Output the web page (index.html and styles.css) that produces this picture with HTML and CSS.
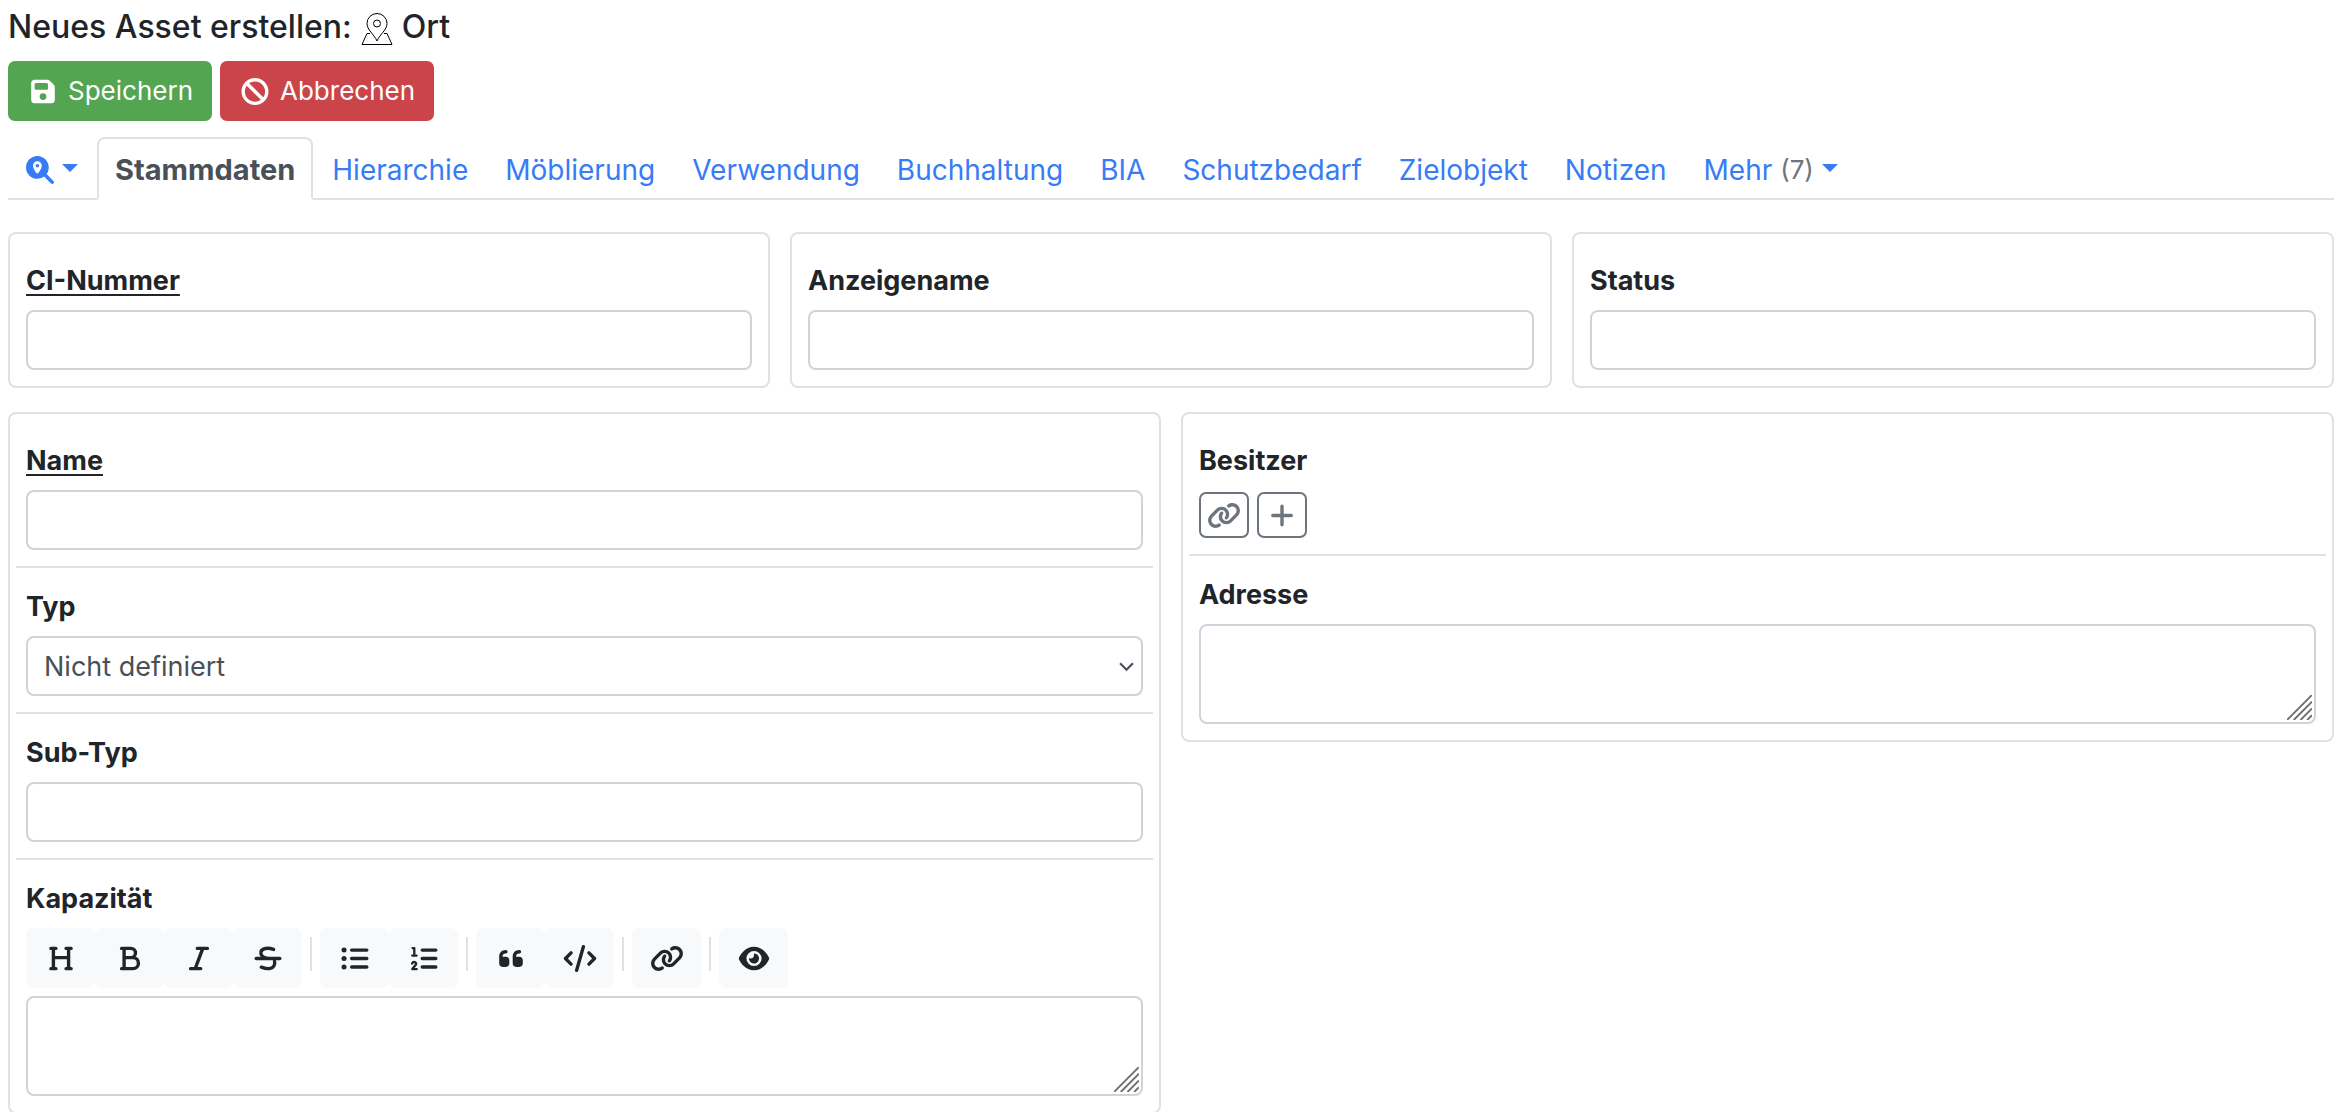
FILE: index.html
```html
<!DOCTYPE html>
<html lang="de">
<head>
<meta charset="utf-8">
<meta name="viewport" content="width=device-width, initial-scale=1">
<title>Neues Asset erstellen: Ort</title>
<link rel="stylesheet" href="styles.css">
</head>
<body>
<svg class="sprite" aria-hidden="true">
  <symbol id="i-link" viewBox="0 0 640 512"><path d="M579.8 267.7c56.5-56.5 56.5-148 0-204.5c-50-50-128.8-56.5-186.3-15.4l-1.6 1.1c-14.4 10.3-17.7 30.3-7.4 44.6s30.3 17.7 44.6 7.4l1.6-1.1c32.1-22.9 76-19.3 103.8 8.6c31.5 31.5 31.5 82.5 0 114L422.3 334.8c-31.5 31.5-82.5 31.5-114 0c-27.9-27.9-31.5-71.8-8.6-103.8l1.1-1.6c10.3-14.4 6.9-34.4-7.4-44.6s-34.4-6.9-44.6 7.4l-1.1 1.6C206.5 251.2 213 330 263 380c56.5 56.5 148 56.5 204.5 0L579.8 267.7zM60.2 244.3c-56.5 56.5-56.5 148 0 204.5c50 50 128.8 56.5 186.3 15.4l1.6-1.1c14.4-10.3 17.7-30.3 7.4-44.6s-30.3-17.7-44.6-7.4l-1.6 1.1c-32.1 22.9-76 19.3-103.8-8.6C74 372 74 321 105.5 289.5L217.7 177.2c31.5-31.5 82.5-31.5 114 0c27.9 27.9 31.5 71.8 8.6 103.9l-1.1 1.6c-10.3 14.4-6.9 34.4 7.4 44.6s34.4 6.9 44.6-7.4l1.1-1.6C433.5 260.8 427 182 377 132c-56.5-56.5-148-56.5-204.5 0L60.2 244.3z"/></symbol>
  <symbol id="i-grip" viewBox="0 0 26 26"><path d="M0 26L26 0M7 26L26 7M14 26L26 14M21 26L26 21" fill="none" stroke="#6f6f6f" stroke-width="2"/></symbol>
</svg>

<header class="page-head">
  <h1 class="title">Neues Asset erstellen:
    <svg class="title-icon" viewBox="0 -4 32 36" aria-hidden="true"><path d="M16 28C13 21 6 17 6 10.500a10 10 0 0 1 20 0C26 17 19 21 16 28z"/><circle cx="16" cy="10.500" r="3.500"/><path d="M9 20.500H6L1 31.500H31L26 20.500H23"/></svg>
    Ort</h1>
  <div class="actions">
    <button type="submit" form="asset" class="btn btn-save"><svg class="icon" viewBox="0 0 448 512" aria-hidden="true"><path d="M64 32C28.700 32 0 60.700 0 96V416c0 35.300 28.700 64 64 64H384c35.300 0 64-28.700 64-64V173.300c0-17-6.700-33.300-18.700-45.300L352 50.700C340 38.700 323.700 32 306.700 32H64zm0 96c0-17.700 14.300-32 32-32H288c17.700 0 32 14.300 32 32v64c0 17.700-14.300 32-32 32H96c-17.700 0-32-14.300-32-32V128zM224 288a64 64 0 1 1 0 128 64 64 0 1 1 0-128z" fill-rule="evenodd"/></svg>Speichern</button>
    <button type="button" class="btn btn-cancel"><svg class="icon" viewBox="0 0 512 512" aria-hidden="true"><path d="M367.200 412.500L99.500 144.800C77.100 176.100 64 214.500 64 256c0 106 86 192 192 192c41.500 0 79.900-13.100 111.200-35.500zm45.300-45.300C434.900 335.900 448 297.500 448 256c0-106-86-192-192-192c-41.500 0-79.900 13.100-111.200 35.500L412.500 367.200zM0 256a256 256 0 1 1 512 0A256 256 0 1 1 0 256z"/></svg>Abbrechen</button>
  </div>
</header>

<nav class="tabs" aria-label="Bereiche">
  <a class="tab tab-search" href="#suche" aria-label="Suche"><svg class="icon-search" viewBox="0 0 512 512" aria-hidden="true"><path fill-rule="evenodd" d="M416 208c0 45.900-14.900 88.300-40 122.700L502.600 457.400c12.500 12.500 12.500 32.800 0 45.300s-32.800 12.500-45.300 0L330.700 376c-34.400 25.200-76.800 40-122.700 40C93.100 416 0 322.900 0 208S93.100 0 208 0S416 93.100 416 208zM288 176c0-44.200-35.800-80-80-80s-80 35.800-80 80c0 48.800 46.500 111.600 68.600 138.600c6 7.300 16.800 7.300 22.700 0c22.100-27 68.700-89.900 68.700-138.600zm-112 0a32 32 0 1 1 64 0a32 32 0 1 1-64 0z"/></svg><span class="caret"></span></a>
  <a class="tab tab-active" href="#stammdaten" aria-current="page">Stammdaten</a>
  <a class="tab" href="#hierarchie">Hierarchie</a>
  <a class="tab" href="#moeblierung">Möblierung</a>
  <a class="tab" href="#verwendung">Verwendung</a>
  <a class="tab" href="#buchhaltung">Buchhaltung</a>
  <a class="tab" href="#bia">BIA</a>
  <a class="tab" href="#schutzbedarf">Schutzbedarf</a>
  <a class="tab" href="#zielobjekt">Zielobjekt</a>
  <a class="tab" href="#notizen">Notizen</a>
  <a class="tab" href="#mehr">Mehr <span class="count">(7)</span><span class="caret"></span></a>
</nav>

<form id="asset" class="form">
  <div class="row row-three">
    <section class="card"><div class="field"><label class="label" for="ci"><span class="required">CI-Nummer</span></label><input class="control" id="ci" type="text"></div></section>
    <section class="card"><div class="field"><label class="label" for="anzeige">Anzeigename</label><input class="control" id="anzeige" type="text"></div></section>
    <section class="card"><div class="field"><label class="label" for="status">Status</label><input class="control" id="status" type="text"></div></section>
  </div>

  <div class="row row-two">
    <section class="card">
      <div class="field"><label class="label" for="name"><span class="required">Name</span></label><input class="control" id="name" type="text"></div>
      <div class="field"><label class="label" for="typ">Typ</label>
        <div class="wrap"><select class="control select" id="typ"><option>Nicht definiert</option></select><svg class="chevron" viewBox="0 0 14 9" aria-hidden="true"><path d="M1 1L7 7L13 1"/></svg></div>
      </div>
      <div class="field"><label class="label" for="subtyp">Sub-Typ</label><input class="control" id="subtyp" type="text"></div>
      <div class="field"><label class="label" for="kapazitaet">Kapazität</label>
        <div class="toolbar" role="toolbar" aria-label="Formatierung">
          <button type="button" class="tool" aria-label="Überschrift"><svg class="glyph line" viewBox="0 0 448 512"><path d="M32 64h96M80 64v384M32 448h96M320 64h96M368 64v384M320 448h96M80 240h288"/></svg></button>
          <button type="button" class="tool" aria-label="Fett"><svg class="glyph line" viewBox="0 0 384 512"><path d="M32 64H208a88 88 0 0 1 0 176H80M208 240h40a104 104 0 0 1 0 208H32M80 64v384"/></svg></button>
          <button type="button" class="tool" aria-label="Kursiv"><svg class="glyph line" viewBox="0 0 384 512"><path d="M160 64h192M32 448h192M264 64L120 448"/></svg></button>
          <button type="button" class="tool" aria-label="Durchgestrichen"><svg class="glyph line" viewBox="0 0 512 512"><path d="M32 256h448M362 84C300 62 240 60 208 66C150 76 112 110 122 168C128 215 180 235 256 256M380 310C396 370 360 430 300 443C240 455 180 440 128 420"/></svg></button>
          <span class="divider"></span>
          <button type="button" class="tool" aria-label="Liste"><svg class="glyph line" viewBox="0 0 512 512"><path d="M192 96h288M192 256h288M192 416h288"/><circle class="dot" cx="48" cy="96" r="48"/><circle class="dot" cx="48" cy="256" r="48"/><circle class="dot" cx="48" cy="416" r="48"/></svg></button>
          <button type="button" class="tool" aria-label="Nummerierte Liste"><svg class="glyph line" viewBox="0 0 512 512"><path d="M222 96h258M222 256h258M222 416h258"/><path class="numeral" d="M40 60h32v132M32 200h84M30 350C50 305 120 318 104 368L34 456H118"/></svg></button>
          <span class="divider"></span>
          <button type="button" class="tool" aria-label="Zitat"><svg class="glyph" viewBox="0 0 448 512"><path d="M0 216C0 149.700 53.700 96 120 96h8c17.700 0 32 14.300 32 32s-14.300 32-32 32h-8c-30.900 0-56 25.100-56 56v8h64c35.300 0 64 28.700 64 64v64c0 35.300-28.700 64-64 64H64c-35.300 0-64-28.700-64-64V216zm256 0c0-66.300 53.700-120 120-120h8c17.700 0 32 14.300 32 32s-14.300 32-32 32h-8c-30.900 0-56 25.100-56 56v8h64c35.300 0 64 28.700 64 64v64c0 35.300-28.700 64-64 64H320c-35.300 0-64-28.700-64-64V216z"/></svg></button>
          <button type="button" class="tool" aria-label="Code"><svg class="glyph line" viewBox="0 0 640 512"><path d="M150 150L45 256L150 362M490 150L595 256L490 362M384 32L256 480"/></svg></button>
          <span class="divider"></span>
          <button type="button" class="tool" aria-label="Link"><svg class="glyph" viewBox="0 0 640 512"><use href="#i-link"/></svg></button>
          <span class="divider"></span>
          <button type="button" class="tool" aria-label="Vorschau"><svg class="glyph" viewBox="0 0 576 512"><path d="M288 32c-80.800 0-145.500 36.800-192.600 80.600C48.600 156 17.300 208 2.500 243.700c-3.300 7.900-3.300 16.700 0 24.600C17.300 304 48.600 356 95.400 399.400C142.500 443.200 207.200 480 288 480s145.500-36.800 192.600-80.600c46.800-43.500 78.100-95.400 93-131.100c3.300-7.900 3.300-16.700 0-24.600c-14.900-35.700-46.200-87.700-93-131.100C433.500 68.800 368.800 32 288 32zM144 256a144 144 0 1 0 288 0 144 144 0 1 0-288 0zm144-64c0 35.300-28.700 64-64 64c-7.100 0-13.900-1.200-20.300-3.300c-5.500-1.800-11.900 1.600-11.700 7.400c.3 6.900 1.300 13.800 3.200 20.700c13.700 51.200 66.400 81.600 117.600 67.900s81.600-66.400 67.900-117.600c-11.100-41.500-47.800-69.400-88.600-71.100c-5.800-.2-9.200 6.100-7.400 11.700c2.100 6.400 3.300 13.200 3.300 20.300z" fill-rule="evenodd"/></svg></button>
        </div>
        <div class="wrap"><textarea class="control area" id="kapazitaet"></textarea><svg class="grip" aria-hidden="true"><use href="#i-grip"/></svg></div>
      </div>
    </section>

    <section class="card">
      <div class="field"><span class="label">Besitzer</span>
        <div class="owner">
          <button type="button" class="mini" aria-label="Verknüpfen"><svg class="glyph" viewBox="0 0 640 512"><use href="#i-link"/></svg></button>
          <button type="button" class="mini" aria-label="Hinzufügen"><svg class="glyph line" viewBox="0 0 448 512"><path d="M48 256h352M224 80v352"/></svg></button>
        </div>
      </div>
      <div class="field"><label class="label" for="adresse">Adresse</label>
        <div class="wrap"><textarea class="control area" id="adresse"></textarea><svg class="grip" aria-hidden="true"><use href="#i-grip"/></svg></div>
      </div>
    </section>
  </div>
</form>
</body>
</html>
```

FILE: styles.css
```css
* { box-sizing: border-box; }

body {
  margin: 0;
  padding: 4px 14px 0 8px;
  background: #fff;
  color: #212529;
  font-family: Inter, "Liberation Sans", sans-serif;
  font-size: 27px;
  line-height: 42px;
}

button, input, select, textarea { font: inherit; color: inherit; }

.sprite { display: none; }

.title {
  display: flex;
  align-items: center;
  gap: 9px;
  margin: 0;
  font-size: 32px;
  line-height: 46px;
  font-weight: 500;
}
.title-icon { width: 32px; height: 36px; fill: none; stroke: #000; stroke-width: 1; }

.actions { display: flex; gap: 8px; margin-top: 11px; }
.btn {
  display: flex;
  align-items: center;
  gap: 8px;
  height: 60px;
  padding: 0 19px 0 18px;
  border: 0;
  border-radius: 7px;
  color: #fff;
  font-size: 26px;
}
.btn-save { background: #53a551; }
.btn-cancel { background: #cb444a; }
.icon { width: 34px; height: 27px; fill: #fff; }

.tabs { display: flex; gap: 1px; margin-top: 16px; border-bottom: 2px solid #dee2e6; font-size: 28px; }
.tab {
  display: flex;
  align-items: center;
  height: 63px;
  margin-bottom: -2px;
  padding: 3px 16px 0;
  border: 2px solid transparent;
  border-radius: 8px 8px 0 0;
  color: #377cf6;
  text-decoration: none;
  white-space: pre;
}
.tab-active { border-color: #dee2e6 #dee2e6 #fff; background: #fff; color: #495057; font-size: 29px; font-weight: 700; }
.icon-search { width: 28px; height: 28px; fill: currentColor; }
.caret { margin: 0 0 5px 8px; border: 8px solid transparent; border-top-color: currentColor; border-bottom: 0; }
.count { color: #6c757d; font-size: 26px; }

.form { margin-top: 32px; }
.row { display: grid; gap: 20px; align-items: start; margin-bottom: 24px; }
.row-three { grid-template-columns: repeat(3, 1fr); }
.row-two { grid-template-columns: repeat(2, 1fr); margin-bottom: 0; }

.card { padding: 8px 6px 0; border: 2px solid #dee2e6; border-radius: 8px; }
.field { padding: 18px 10px 16px; }
.field + .field { border-top: 2px solid #dee2e6; }
.label { display: block; margin-bottom: 8px; font-weight: 700; }
.required { text-decoration: underline; text-decoration-thickness: 2px; text-underline-offset: 4px; text-decoration-skip-ink: none; }

.control {
  display: block;
  width: 100%;
  height: 60px;
  padding: 0 16px;
  border: 2px solid #ced4da;
  border-radius: 8px;
  background: #fff;
  color: #495057;
}
.select { padding-top: 2px; appearance: none; }
.area { height: 100px; padding: 8px 16px; resize: none; }
.wrap { position: relative; }
.chevron { position: absolute; right: 9px; top: 26px; width: 15px; height: 10px; fill: none; stroke: #495057; stroke-width: 2; pointer-events: none; }
.grip { position: absolute; right: 4px; bottom: 4px; width: 25px; height: 25px; pointer-events: none; }

.toolbar { display: flex; align-items: flex-start; margin-bottom: 8px; }
.tool {
  display: flex;
  align-items: center;
  justify-content: center;
  width: 69px;
  height: 60px;
  padding: 0;
  border: 0;
  border-radius: 8px;
  background: #f8f9fa;
}
.divider { width: 2px; height: 34px; margin: 9px 8px 0; background: #dee2e6; }
.glyph { width: 34px; height: 27px; fill: currentColor; }
.line { fill: none; stroke: currentColor; stroke-width: 64; stroke-linecap: round; stroke-linejoin: round; }
.dot { fill: currentColor; stroke: none; }
.numeral { stroke-width: 44; }

.owner { display: flex; gap: 8px; padding-top: 2px; }
.mini {
  display: flex;
  align-items: center;
  justify-content: center;
  width: 50px;
  height: 46px;
  padding: 0;
  border: 2px solid #6c757d;
  border-radius: 7px;
  background: #fff;
  color: #6c757d;
}
```
